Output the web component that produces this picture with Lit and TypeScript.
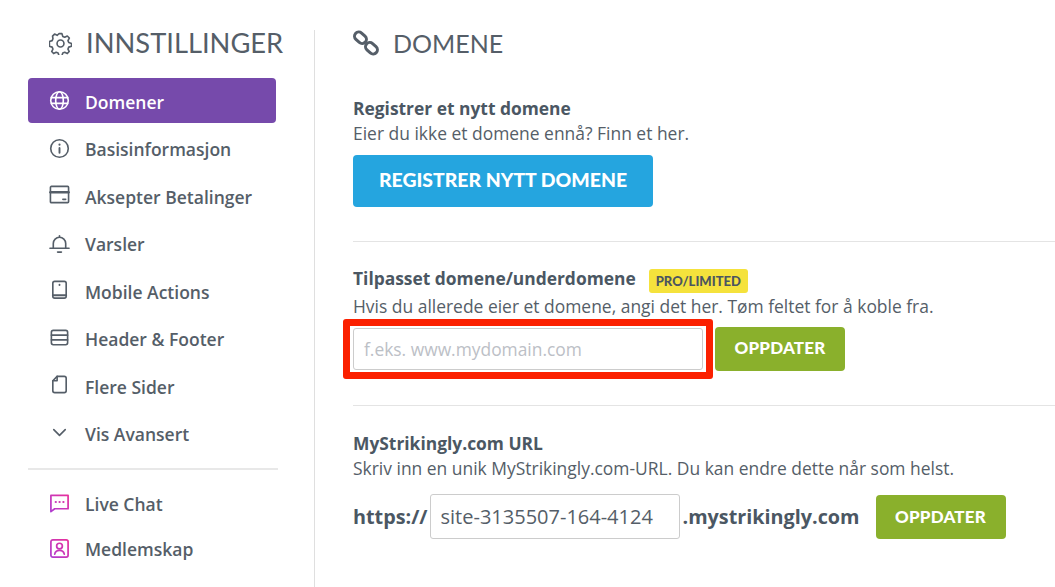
import { LitElement, html, css, svg } from "lit";
import { customElement } from "lit/decorators.js";

const s = (inner: unknown) => html`<svg class="ic" viewBox="0 0 22 22" fill="none" stroke="currentColor" stroke-width="1.7" stroke-linecap="round" stroke-linejoin="round">${inner}</svg>`;

const icons: Record<string, unknown> = {
  globe: s(svg`<circle cx="11" cy="11" r="9.2"/><ellipse cx="11" cy="11" rx="4" ry="9.2"/><path d="M2.500 8h17M2.500 14h17"/>`),
  info: s(svg`<circle cx="11" cy="11" r="9.200"/><path d="M11 10.500v5" stroke-width="2"/><path d="M11 6.800v.2" stroke-width="2.200"/>`),
  card: s(svg`<rect x="1.500" y="1.500" width="19" height="17" rx="1"/><path d="M1.500 7.500h19" stroke-width="2.600"/><path d="M14.500 15h3"/>`),
  bell: s(svg`<path d="M1 16h20"/><path d="M4.500 16v-5a6.500 6.500 0 0 1 13 0v5"/><path d="M11 3v1"/><path d="M9 20h4"/>`),
  tablet: s(svg`<rect x="4" y="1.500" width="14" height="17.500" rx="2"/><path d="M4 16h14" stroke-width="2"/><path d="M11 5v.2" stroke-width="2"/>`),
  header: s(svg`<rect x="2.500" y="2.500" width="17" height="15" rx="2"/><path d="M2.500 7.500h17M2.500 12.500h17"/>`),
  page: s(svg`<path d="M8.500 1.500H16a2 2 0 0 1 2 2v13a2 2 0 0 1-2 2H6a2 2 0 0 1-2-2V6z"/><path d="M8.500 1.500V6H4"/>`),
  chev: s(svg`<path d="M5 7l6 6 6-6"/>`),
};

const gradIcon = (id: string, inner: unknown) => html`<svg class="ic" viewBox="0 0 22 22" fill="none" stroke="url(#${id})" stroke-width="1.8" stroke-linejoin="round" stroke-linecap="round"><defs><linearGradient id=${id} gradientUnits="userSpaceOnUse" x1="0" y1="22" x2="22" y2="0"><stop offset="0" stop-color="#a93ed6"/><stop offset="1" stop-color="#ee2f96"/></linearGradient></defs>${inner}</svg>`;

@customElement("app-root")
export class AppRoot extends LitElement {
  static styles = css`
    :host { display: block; height: 587px; width: 1055px; overflow: hidden; background: #fff; font-family: "Open Sans", sans-serif; color: #4b5560; position: relative; }
    .page { display: flex; height: 587px; }
    .side { width: 314px; box-sizing: border-box; padding: 28px 36px 0 28px; flex: none; }
    .rule-v { width: 1px; background: #dfdfdf; margin-top: 30px; flex: none; }
    .side-title { display: flex; align-items: center; gap: 14px; padding-left: 21px; height: 30px; font: 400 27.300px/30px Lato, sans-serif; color: #555e68; white-space: nowrap; margin-bottom: 20px; }
    .side-title svg { width: 23px; height: 23px; flex: none; }
    .item { display: flex; align-items: center; height: 45px; margin-bottom: 2.500px; padding: 2px 0 0 21px; width: 248px; box-sizing: border-box; border-radius: 4px; font-size: 17.500px; font-weight: 600; color: #555e68; gap: 15px; white-space: nowrap; }
    .item.on { background: #764aab; color: #fff; }
    .ic { width: 21px; height: 21px; flex: none; display: block; margin-top: -2px; }
    .hr { height: 2px; width: 250px; background: #e8e8e8; margin: 12px 0 11px; }
    .item.low { margin-bottom: 0; }
    .main { flex: 1; padding: 28px 0 0 38px; min-width: 0; }
    .main-title { display: flex; align-items: center; gap: 14px; height: 30px; font: 400 25px/30px Lato, sans-serif; color: #555e68; margin-bottom: 38px; }
    .main-title svg { width: 26px; height: 26px; flex: none; }
    h4 { margin: 0; font-size: 17.400px; line-height: 24px; font-weight: 700; color: #4b5763; display: flex; align-items: flex-start; white-space: nowrap; }
    p { margin: 0; font-size: 17.450px; line-height: 26px; color: #555e68; white-space: nowrap; }
    .btn { box-sizing: border-box; display: inline-flex; align-items: center; justify-content: center; border-radius: 4px; color: #fff; font-family: Lato, sans-serif; font-weight: 900; flex: none; }
    .blue { width: 300px; height: 52px; background: #25a5df; font-size: 19.400px; margin-top: 9px; padding-bottom: 3px; }
    .green { width: 130px; height: 44px; background: #8ab02c; font-size: 17px; letter-spacing: 0.2px; }
    .sep { height: 1px; background: #e4e4e4; }
    .s1 { padding-bottom: 34px; }
    .s2 { padding: 24px 0 34px; }
    .s2 .green { padding-bottom: 3px; }
    .s2 .row { margin-top: 8px; }
    .s3 { padding-top: 25px; }
    .badge { margin: 3px 0 0 13px; background: #f5e23c; border-radius: 3px; font: 900 13px/24px Lato, sans-serif; height: 24px; padding: 0 7px; color: #4b5560; }
    .row { display: flex; align-items: center; }
    .field { box-sizing: border-box; border: 1px solid #ccc; border-radius: 3px; padding: 0 10px; display: flex; align-items: center; background: #fff; white-space: nowrap; }
    .f1 { width: 350px; height: 42px; font-size: 17.400px; color: #bcc0c6; margin-right: 12px; }
    .f2 { width: 250px; height: 45px; font-size: 20px; color: #555e68; margin: 0 3px 0 2px; }
    .bold { font-size: 19.800px; font-weight: 700; color: #4b5763; white-space: nowrap; }
    .row3 { margin-top: 13px; }
    .row3 .green { margin-left: 16px; }
    .mark { position: absolute; left: 343px; top: 319px; width: 370px; height: 60px; box-sizing: border-box; border: 7px solid #fb2000; border-radius: 3px; pointer-events: none; }
  `;

  render() {
    const items: [string, string][] = [
      ["Basisinformasjon", "info"], ["Aksepter Betalinger", "card"], ["Varsler", "bell"],
      ["Mobile Actions", "tablet"], ["Header & Footer", "header"], ["Flere Sider", "page"], ["Vis Avansert", "chev"],
    ];
    return html`
      <div class="page">
        <aside class="side">
          <div class="side-title">
            <svg viewBox="0 0 24 24" fill="none" stroke="currentColor" stroke-width="1.700" stroke-linejoin="round"><circle cx="12" cy="12" r="3.600"/><path d="M10.500 2h3l.9 2.900 2 .9 2.700-1.300 2.100 2.100-1.400 2.700.8 2 2.900 1v2.800l-2.900 1-.8 2 1.300 2.600-2 2.100-2.700-1.300-2 .8-1 2.900h-2.900l-1-2.900-2-.8-2.700 1.300-2-2.100 1.300-2.600-.8-2-2.900-1V10.300l2.900-1 .8-2L3.700 4.600l2.100-2.100 2.700 1.300 1-.9z" transform="translate(0 -.300)"/></svg>
            INNSTILLINGER
          </div>
          <div class="item on">${icons.globe}Domener</div>
          ${items.map(([t, i]) => html`<div class="item">${icons[i]}${t}</div>`)}
          <div class="hr"></div>
          <div class="item low">${gradIcon("g1", svg`<path d="M2 2.500h18v14H6l-4 3z"/><path d="M7 9.500h.2M11 9.500h.2M15 9.500h.2" stroke-width="2.200"/>`)}Live Chat</div>
          <div class="item low">${gradIcon("g2", svg`<rect x="2" y="2" width="18" height="18" rx="2"/><circle cx="11" cy="8.500" r="3"/><path d="M6 17c.5-3 2.500-4 5-4s4.500 1 5 4"/>`)}Medlemskap</div>
        </aside>
        <div class="rule-v"></div>
        <main class="main">
          <div class="main-title">
            <svg viewBox="0 0 26 26" fill="none" stroke="currentColor" stroke-width="3"><rect x="1" y="3.500" width="13" height="8.500" rx="4.200" transform="rotate(42 7.500 7.700)"/><rect x="12" y="14" width="13" height="8.500" rx="4.200" transform="rotate(42 18.500 18.200)"/></svg>
            DOMENE
          </div>
          <section class="s1">
            <h4>Registrer et nytt domene</h4>
            <p>Eier du ikke et domene ennå? Finn et her.</p>
            <div class="btn blue">REGISTRER NYTT DOMENE</div>
          </section>
          <div class="sep"></div>
          <section class="s2">
            <h4>Tilpasset domene/underdomene<span class="badge">PRO/LIMITED</span></h4>
            <p>Hvis du allerede eier et domene, angi det her. Tøm feltet for å koble fra.</p>
            <div class="row"><div class="field f1">f.eks. www.mydomain.com</div><div class="btn green">OPPDATER</div></div>
          </section>
          <div class="sep"></div>
          <section class="s3">
            <h4>MyStrikingly.com URL</h4>
            <p>Skriv inn en unik MyStrikingly.com-URL. Du kan endre dette når som helst.</p>
            <div class="row row3"><span class="bold">https://</span><div class="field f2">site-3135507-164-4124</div><span class="bold">.mystrikingly.com</span><div class="btn green">OPPDATER</div></div>
          </section>
        </main>
      </div>
      <div class="mark"></div>
    `;
  }
}
